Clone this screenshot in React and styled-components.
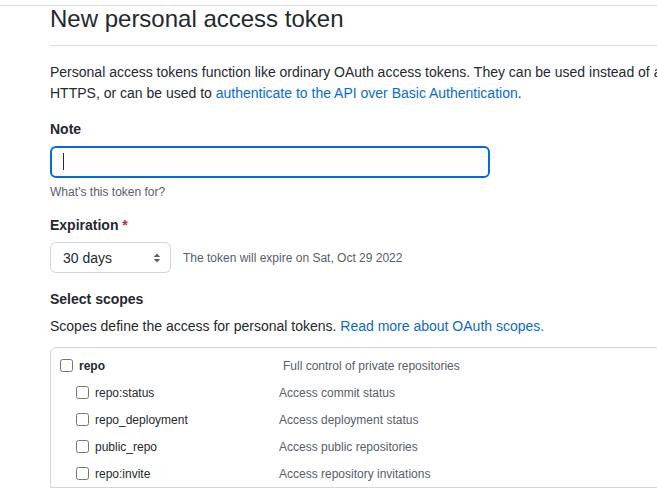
import styled, { createGlobalStyle } from "styled-components"

const GlobalStyle = createGlobalStyle`
  html, body {
    margin: 0;
    padding: 0;
    background: #ffffff;
    overflow: hidden;
  }
  body {
    font-family: "Liberation Sans", Arial, sans-serif;
    color: #24292f;
  }
`

const scopes = [
  { name: "repo", desc: "Full control of private repositories", parent: true },
  { name: "repo:status", desc: "Access commit status" },
  { name: "repo_deployment", desc: "Access deployment status" },
  { name: "public_repo", desc: "Access public repositories" },
  { name: "repo:invite", desc: "Access repository invitations" },
]

function App() {
  return (
    <>
      <GlobalStyle />
      <Page>
        <TopRule />
        <Main>
          <Subhead>
            <Heading>New personal access token</Heading>
          </Subhead>
          <Intro>
            Personal access tokens function like ordinary OAuth access tokens. They can be used instead of a
            password for Git over HTTPS, or can be used to{" "}
            <Link href="#">authenticate to the API over Basic Authentication</Link>.
          </Intro>

          <FormGroup>
            <Label>Note</Label>
            <InputWrap>
              <TextInput type="text" aria-label="Note" />
              <Caret />
            </InputWrap>
            <Hint>What’s this token for?</Hint>
          </FormGroup>

          <FormGroup>
            <Label>
              Expiration <Required>*</Required>
            </Label>
            <ExpiryRow>
              <SelectWrap>
                <Select defaultValue="30">
                  <option value="7">7 days</option>
                  <option value="30">30 days</option>
                  <option value="60">60 days</option>
                  <option value="90">90 days</option>
                </Select>
                <SelectArrows width="8" height="12" viewBox="0 0 8 12">
                  <path d="M4 1.5 L7.2 5 H0.8 Z" fill="#57606a" />
                  <path d="M4 10.5 L7.2 7 H0.8 Z" fill="#57606a" />
                </SelectArrows>
              </SelectWrap>
              <ExpiryNote>The token will expire on Sat, Oct 29 2022</ExpiryNote>
            </ExpiryRow>
          </FormGroup>

          <ScopeGroup>
            <Label>Select scopes</Label>
            <ScopeIntro>
              Scopes define the access for personal tokens.{" "}
              <Link href="#">Read more about OAuth scopes.</Link>
            </ScopeIntro>
            <ScopeBox>
              {scopes.map(scope => (
                <ScopeRow key={scope.name} $child={!scope.parent}>
                  <ScopeName $child={!scope.parent}>
                    <Check type="checkbox" />
                    <ScopeLabel $bold={scope.parent}>{scope.name}</ScopeLabel>
                  </ScopeName>
                  <ScopeDesc>{scope.desc}</ScopeDesc>
                </ScopeRow>
              ))}
            </ScopeBox>
          </ScopeGroup>
        </Main>
      </Page>
    </>
  )
}

export default App

const Page = styled.div`
  width: 900px;
`

const TopRule = styled.div`
  height: 5px;
  border-bottom: 1px solid #d8dee4;
`

const Main = styled.div`
  padding-left: 50px;
  width: 765px;
`

const Subhead = styled.div`
  padding-top: 1px;
  padding-bottom: 14px;
  border-bottom: 1px solid #d8dee4;
  margin-bottom: 16px;
`

const Heading = styled.h2`
  margin: 0;
  font-size: 24px;
  line-height: 24px;
  font-weight: 400;
  color: #24292f;
`

const Intro = styled.p`
  margin: 0 0 15px;
  font-size: 14px;
  line-height: 21px;
`

const Link = styled.a`
  color: #0969da;
  text-decoration: none;
`

const FormGroup = styled.div`
  margin-bottom: 14px;
`

const Label = styled.div`
  font-size: 14px;
  line-height: 21px;
  font-weight: 700;
  margin-bottom: 6px;
`

const Required = styled.span`
  color: #cf222e;
`

const InputWrap = styled.div`
  position: relative;
  width: 440px;
  height: 32px;
`

const TextInput = styled.input`
  box-sizing: border-box;
  width: 100%;
  height: 100%;
  border: 2px solid #0969da;
  border-radius: 6px;
  padding: 0 12px;
  font-family: inherit;
  font-size: 14px;
  outline: none;
  background: #ffffff;
`

const Caret = styled.span`
  position: absolute;
  left: 13px;
  top: 7px;
  width: 1px;
  height: 17px;
  background: #24292f;
`

const Hint = styled.div`
  margin-top: 5px;
  font-size: 12px;
  line-height: 18px;
  color: #57606a;
`

const ExpiryRow = styled.div`
  display: flex;
  align-items: center;
  gap: 12px;
`

const SelectWrap = styled.div`
  position: relative;
  width: 121px;
  height: 31px;
`

const Select = styled.select`
  appearance: none;
  box-sizing: border-box;
  width: 100%;
  height: 100%;
  border: 1px solid #d0d7de;
  border-radius: 6px;
  background: #ffffff;
  padding: 0 24px 0 12px;
  font-family: inherit;
  font-size: 14px;
  color: #24292f;
  outline: none;
`

const SelectArrows = styled.svg`
  position: absolute;
  right: 10px;
  top: 10px;
  pointer-events: none;
`

const ExpiryNote = styled.span`
  font-size: 12px;
  color: #57606a;
`

const ScopeGroup = styled.div`
  margin-top: 16px;
`

const ScopeIntro = styled.p`
  margin: 0 0 10px;
  font-size: 14px;
  line-height: 21px;
`

const ScopeBox = styled.div`
  border: 1px solid #d0d7de;
  border-radius: 6px 0 0 0;
  padding: 4px 0 0 9px;
`

const ScopeRow = styled.div`
  display: flex;
  align-items: center;
  height: 27px;
  padding-left: ${p => (p.$child ? "16px" : "0")};
`

const ScopeName = styled.label`
  display: flex;
  align-items: center;
  width: ${p => (p.$child ? "203px" : "223px")};
`

const Check = styled.input`
  width: 13px;
  height: 13px;
  margin: 0 6px 0 0;
`

const ScopeLabel = styled.span`
  font-size: 12px;
  font-weight: ${p => (p.$bold ? 700 : 400)};
  color: #24292f;
`

const ScopeDesc = styled.span`
  font-size: 12px;
  color: #57606a;
`
